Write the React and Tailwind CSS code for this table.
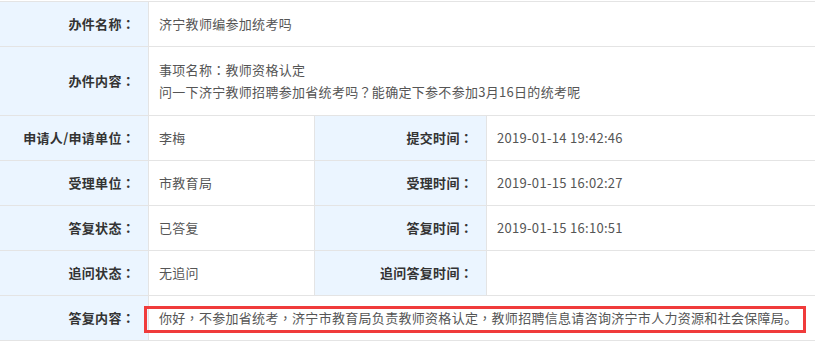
import React from "react";

const font = { fontFamily: '"Microsoft YaHei", "Noto Sans CJK SC", "Noto Sans", sans-serif' };
const tcFont = { fontFamily: '"Noto Sans CJK TC", sans-serif' };

// fullwidth punctuation sits centred in the reference, as in the TC cut
const T = ({ text }) =>
  text.split(/([：，？。])/).map((part, i) =>
    /^[：，？]$/.test(part) ? (
      <span key={i} style={tcFont}>
        {part}
      </span>
    ) : (
      <React.Fragment key={i}>{part}</React.Fragment>
    )
  );

const Label = ({ children, className = "" }) => (
  <div
    className={`flex items-center justify-end bg-[#ebf5ff] pr-[13px] text-[13px] font-bold tracking-[0.3px] text-[#333] ${className}`}
  >
    <T text={children} />
  </div>
);

const Value = ({ children, className = "" }) => (
  <div
    className={`flex items-center whitespace-nowrap pl-[10px] text-[13px] tracking-[0.3px] text-[#555] ${className}`}
  >
    <span>
      <T text={children} />
    </span>
  </div>
);

const rows = [
  ["申请人/申请单位：", "李梅", "提交时间：", "2019-01-14 19:42:46"],
  ["受理单位：", "市教育局", "受理时间：", "2019-01-15 16:02:27"],
  ["答复状态：", "已答复", "答复时间：", "2019-01-15 16:10:51"],
  ["追问状态：", "无追问", "追问答复时间：", ""],
];

export default function App() {
  return (
    <div className="h-[342px] w-[815px] overflow-hidden bg-white" style={font}>
      <div className="mt-px border-t border-[#e4e4e4]">
        {/* 办件名称 */}
        <div className="flex h-[45px] border-b border-[#e4e4e4]">
          <Label className="w-[149px] border-r border-[#e4e4e4]">办件名称：</Label>
          <Value className="flex-1">济宁教师编参加统考吗</Value>
        </div>

        {/* 办件内容 */}
        <div className="flex h-[69px] border-b border-[#e4e4e4]">
          <Label className="w-[149px] border-r border-[#e4e4e4]">办件内容：</Label>
          <div className="flex flex-1 flex-col justify-center pl-[10px] text-[13px] leading-[22px] tracking-[0.3px] text-[#555]">
            <div>
              <T text="事项名称：教师资格认定" />
            </div>
            <div>
              <T text="问一下济宁教师招聘参加省统考吗？能确定下参不参加3月16日的统考呢" />
            </div>
          </div>
        </div>

        {rows.map(([l1, v1, l2, v2]) => (
          <div key={l1} className="flex h-[45px] border-b border-[#e4e4e4]">
            <Label className="w-[149px] border-r border-[#e4e4e4]">{l1}</Label>
            <Value className="w-[166px] border-r border-[#e4e4e4]">{v1}</Value>
            <Label className="w-[172px] border-r border-[#e4e4e4]">{l2}</Label>
            <Value className="flex-1">{v2}</Value>
          </div>
        ))}

        {/* 答复内容 */}
        <div className="relative flex h-[45px] border-b border-[#e4e4e4]">
          <Label className="w-[149px] border-r border-[#e4e4e4]">答复内容：</Label>
          <Value className="flex-1">
            你好，不参加省统考，济宁市教育局负责教师资格认定，教师招聘信息请咨询济宁市人力资源和社会保障局。
          </Value>
          <div className="pointer-events-none absolute left-[144px] top-[10px] h-[27px] w-[662px] border-[3px] border-[#f03b3b]" />
        </div>
      </div>
    </div>
  );
}
